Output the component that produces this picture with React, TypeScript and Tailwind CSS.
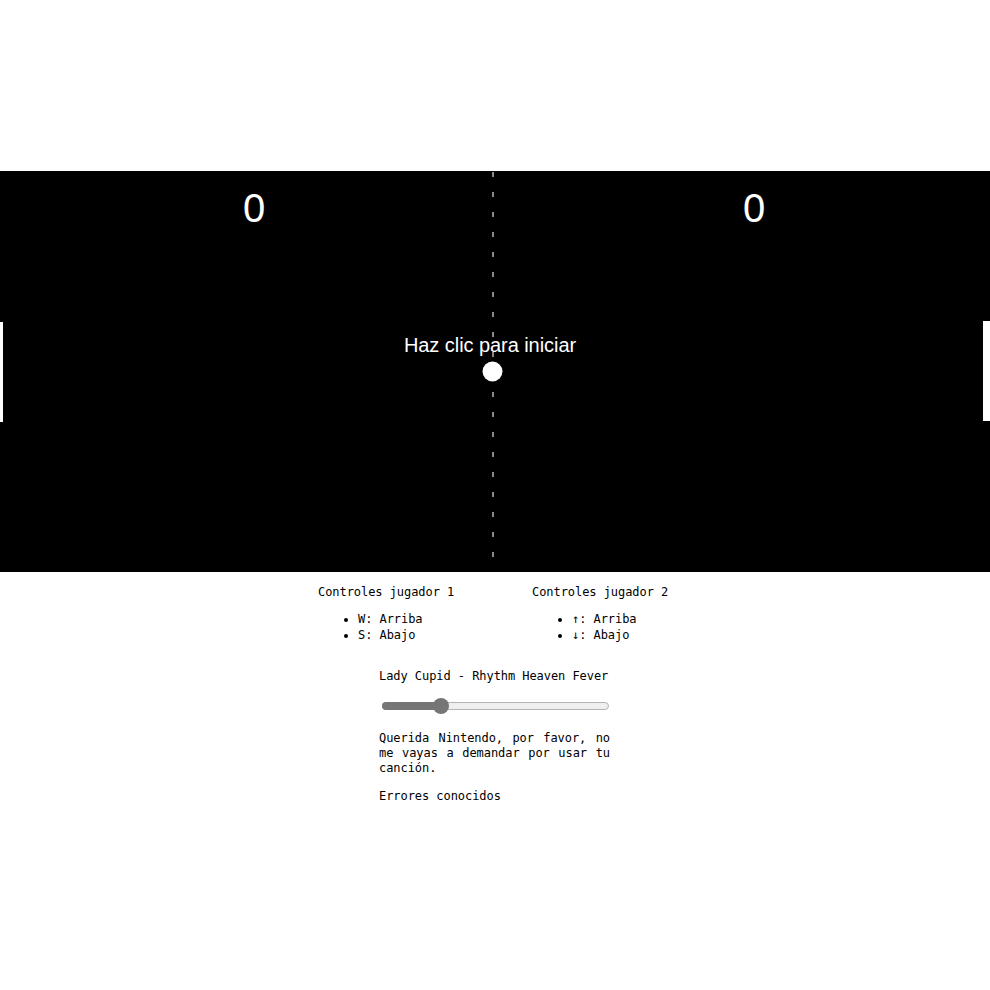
import React from "react";

const mono = {
  fontFamily: '"DejaVu Sans Mono", "Liberation Mono", monospace',
  letterSpacing: "-0.06px",
};

const dashes = Array.from({ length: 20 }, (_, i) => 1 + i * 20);

const Court = () => (
  <svg
    width="990"
    height="401"
    viewBox="0 0 990 401"
    className="block bg-black"
  >
    {/* center line */}
    {dashes.map((y) => (
      <rect key={y} x="492" y={y} width="2" height="5" fill="#8a8a8a" />
    ))}

    {/* scores */}
    <text x="254" y="51" fill="#fff" fontSize="40" textAnchor="middle" fontFamily="Liberation Sans, Arial, sans-serif">
      0
    </text>
    <text x="754" y="51" fill="#fff" fontSize="40" textAnchor="middle" fontFamily="Liberation Sans, Arial, sans-serif">
      0
    </text>

    {/* paddles */}
    <rect x="0" y="151" width="3" height="100" fill="#fff" />
    <rect x="983" y="150" width="7" height="100" fill="#fff" />

    <text x="490" y="181" fill="#fff" fontSize="20" textAnchor="middle" fontFamily="Liberation Sans, Arial, sans-serif">
      Haz clic para iniciar
    </text>

    {/* ball */}
    <circle cx="492.5" cy="200.5" r="10" fill="#fff" />
  </svg>
);

const Controls = ({ title, up, down }: { title: string; up: string; down: string }) => (
  <div className="w-[137px]">
    <p className="leading-[15px] whitespace-nowrap">{title}</p>
    <ul className="mt-[11px] list-disc pl-10 leading-4 whitespace-nowrap">
      <li>{up}: Arriba</li>
      <li>{down}: Abajo</li>
    </ul>
  </div>
);

const Volume = () => (
  <div className="relative mx-[3px] w-[227px] h-2">
    <div className="h-2 rounded-full bg-[#efefef] border border-[#b5b5b5]" />
    <div className="absolute left-0 top-0 h-2 w-[60px] rounded-l-full bg-[#767676]" />
    <div className="absolute left-[51px] top-[-4px] w-4 h-4 rounded-full bg-[#767676]" />
  </div>
);

export default function App() {
  return (
    <div className="min-h-[990px] bg-white text-black text-[12px]" style={mono}>
      <div className="pt-[171px]">
        <Court />
      </div>

      <div className="mt-[13px] flex justify-center gap-[77px] pr-[3px]">
        <Controls title="Controles jugador 1" up="W" down="S" />
        <Controls title="Controles jugador 2" up="↑" down="↓" />
      </div>

      <div className="mt-[26px] flex justify-center pr-[1px]">
        <div className="w-[231px]">
          <p className="leading-[15px] whitespace-nowrap">Lady Cupid - Rhythm Heaven Fever</p>
          <div className="mt-[18px]">
            <Volume />
          </div>
          <p className="mt-[21px] leading-[15px] text-justify">
            Querida Nintendo, por favor, no me vayas a demandar por usar tu canción.
          </p>
          <p className="mt-[13px] leading-[15px]">Errores conocidos</p>
        </div>
      </div>
    </div>
  );
}
